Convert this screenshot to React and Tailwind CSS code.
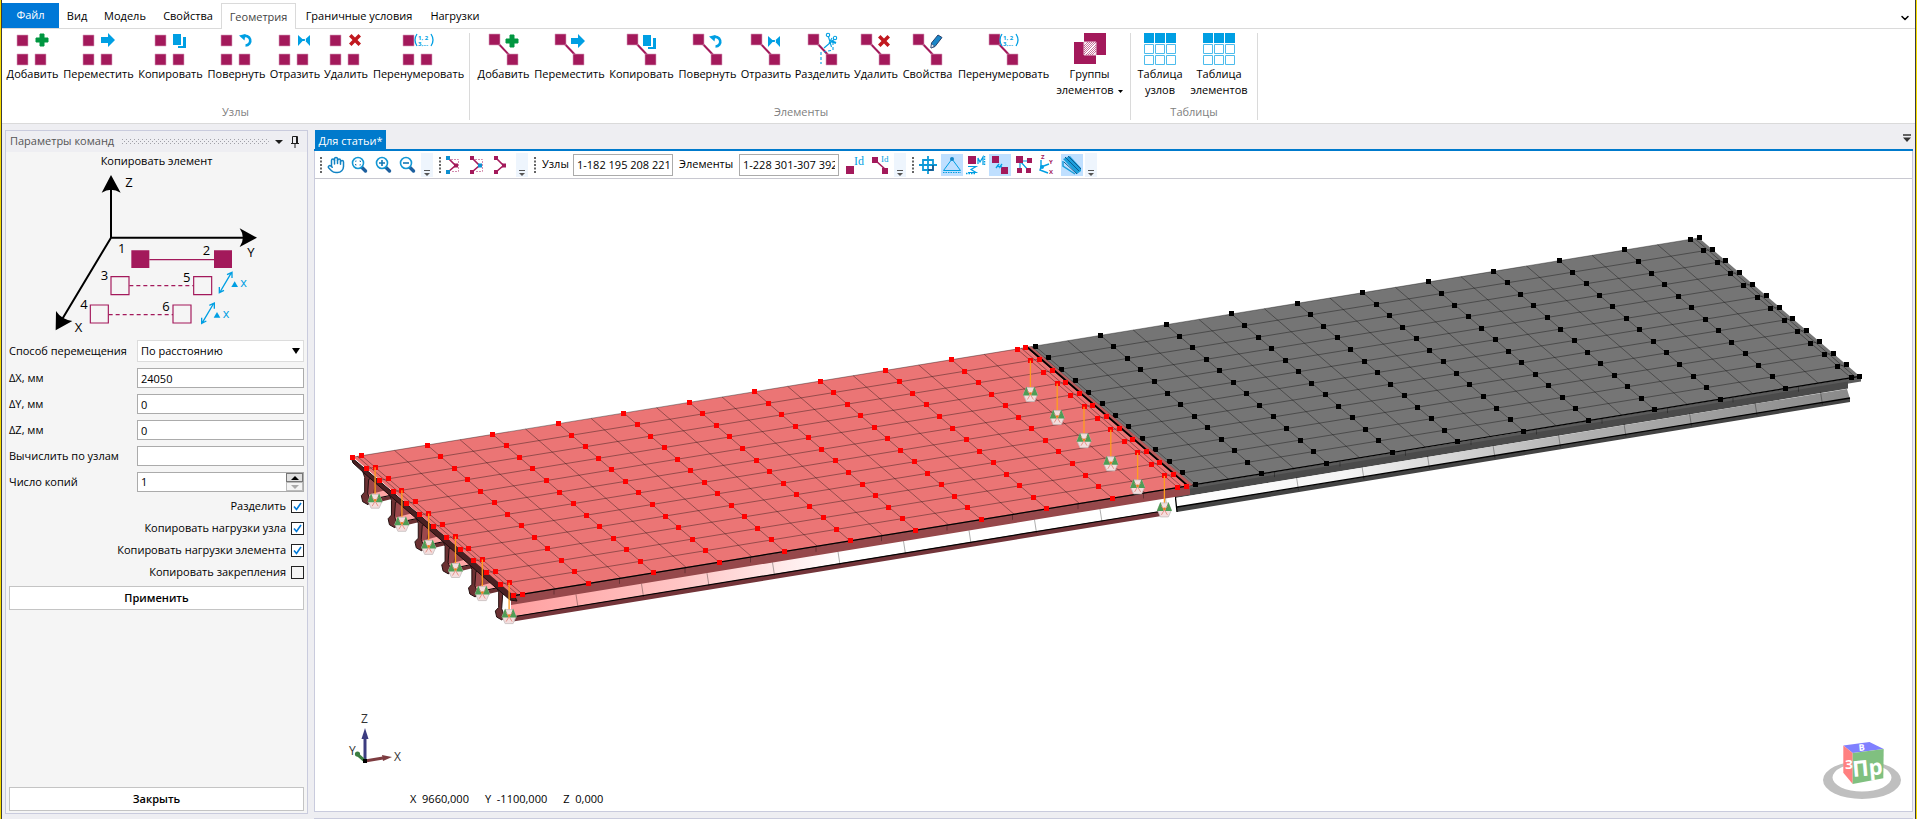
import React from "react";
import { Hand, ChevronDown } from "lucide-react";

const PLUM = "#a3195b";
const BLUE = "#009fe3";

/* ---------- ribbon icons ---------- */

function Badge({ kind }) {
  switch (kind) {
    case "add":
      return <path d="M5 1h4v4h4v4H9v4H5V9H1V5h4z" fill="#009640" stroke="#009640" />;
    case "move":
      return <path d="M0 4h7V0l7 7-7 7v-4H0z" fill={BLUE} />;
    case "copy":
      return (
        <g fill={BLUE}>
          <path d="M0 1h8v11H0z" />
          <path d="M10 4h3v11H5v-2h5z" />
        </g>
      );
    case "rotate":
      return (
        <g>
          <path d="M4 3.6A4.8 4.8 0 1 1 6.5 12.5" fill="none" stroke={BLUE} strokeWidth="2.6" />
          <path d="M0 2.5l6.5-1.5-1 6.5z" fill={BLUE} />
        </g>
      );
    case "mirror":
      return <path d="M1 2l5.5 5L1 13zM13 2L7.500 7 13 13zM5 6h4v2H5z" fill={BLUE} />;
    case "delete":
      return <path d="M3.500 1L7 4.500 10.500 1 13 3.500 9.500 7l3.500 3.500-2.500 2.500L7 9.500 3.500 13 1 10.500 4.500 7 1 3.500z" fill="#c1181f" />;
    case "cut":
      return (
        <g fill="none" stroke={BLUE} strokeWidth="1.1">
          <circle cx="4" cy="1" r="1.700" />
          <circle cx="11" cy="4" r="1.700" />
          <path d="M4.500 3l3 10M10 5.500L0 14M5 9l3-5" />
          <path d="M7 7l5 2" strokeWidth="2" />
          <path d="M-3 18v12M9 8v8l-9 2" strokeDasharray="3 2" />
        </g>
      );
    case "edit":
      return (
        <g>
          <path d="M9 1l4 2.500-7 9L2 14l.5-5z" fill="#1a86c8" stroke="#27406b" strokeWidth="1" />
          <path d="M2 14l.5-4 3 2z" fill="#fff" stroke="#27406b" strokeWidth=".6" />
        </g>
      );
    default:
      return null;
  }
}

function Numbers({ x }) {
  return (
    <g fill={BLUE} fontFamily="Open Sans, sans-serif" fontWeight="700">
      <text x={x + 4} y="7" fontSize="6">1, 2</text>
      <text x={x + 4} y="13" fontSize="6">3,...</text>
      <path
        d={`M${x + 3} 1q-4 6 0 12M${x + 17} 1q4 6 0 12`}
        fill="none"
        stroke={BLUE}
        strokeWidth="1.300"
      />
    </g>
  );
}

function NodeIcon({ kind }) {
  return (
    <svg viewBox="1 0 32 32" className="h-8 w-8 overflow-visible" aria-hidden="true">
      <g fill={PLUM} stroke="#d9a3bf" strokeWidth=".6">
        <path d="M1 2h11v11H1zM1 21h11v11H1zM19 21h11v11H19z" />
      </g>
      {kind === "renumber" ? (
        <Numbers x={12} />
      ) : (
        <g transform="translate(19 0)">
          <Badge kind={kind} />
        </g>
      )}
    </svg>
  );
}

function ElementIcon({ kind }) {
  return (
    <svg viewBox="0 0 32 32" className="h-8 w-8 overflow-visible" aria-hidden="true">
      <path d="M7 7l18 19" stroke={PLUM} strokeWidth="2" />
      <g fill={PLUM} stroke="#d9a3bf" strokeWidth=".6">
        <path d="M1 1h11v11H1zM19 21h11v11H19z" />
      </g>
      {kind === "renumber" ? (
        <Numbers x={11} />
      ) : (
        <g transform="translate(17 1)">
          <Badge kind={kind} />
        </g>
      )}
    </svg>
  );
}

function GroupsIcon() {
  return (
    <svg viewBox="0 0 32 32" className="h-8 w-8" aria-hidden="true">
      <path d="M10 0h22v22H22v9H0V9h10z" fill={PLUM} />
      <path d="M10 9h12v13H10z" fill="#fff" stroke="#e6c2d3" />
      <path
        d="M10 13l4-4M10 17l8-8M10 21l12-12M14 22l8-8M18 22l4-4M12 22l10-10M10 19l10-10M10 15l6-6M16 22l6-6"
        stroke={PLUM}
        strokeWidth=".6"
      />
    </svg>
  );
}

function TableIcon() {
  return (
    <svg viewBox="0 0 32 32" className="h-8 w-8" aria-hidden="true">
      <path d="M0 0h10v10H0zM11 0h10v10H11zM22 0h10v10H22z" fill={BLUE} />
      <path
        d="M.5 11.500h9v9h-9zM11.500 11.500h9v9h-9zM22.500 11.500h9v9h-9zM.5 22.500h9v9h-9zM11.500 22.500h9v9h-9zM22.500 22.500h9v9h-9z"
        fill="none"
        stroke="#4dbcec"
      />
    </svg>
  );
}

function RibbonButton({ icon, width, children }) {
  return (
    <button type="button" className={`flex shrink-0 flex-col items-center ${width}`}>
      {icon}
      <span className="mt-px whitespace-nowrap text-center leading-4">{children}</span>
    </button>
  );
}

function RibbonGroup({ title, pad, children }) {
  return (
    <section className={`flex shrink-0 flex-col border-r border-[#dadada] ${pad}`}>
      <div className="flex flex-1 items-start">{children}</div>
      <h2 className="text-center leading-4 text-[#808080]">{title}</h2>
    </section>
  );
}

const nodeTools = [
  ["add", "Добавить", "w-[57px]"],
  ["move", "Переместить", "w-[75px]"],
  ["copy", "Копировать", "w-[69px]"],
  ["rotate", "Повернуть", "w-[63px]"],
  ["mirror", "Отразить", "w-[54px]"],
  ["delete", "Удалить", "w-[48px]"],
  ["renumber", "Перенумеровать", "w-[97px]"],
];

const elementTools = [
  ["add", "Добавить", "w-[57px]"],
  ["move", "Переместить", "w-[75px]"],
  ["copy", "Копировать", "w-[69px]"],
  ["rotate", "Повернуть", "w-[63px]"],
  ["mirror", "Отразить", "w-[54px]"],
  ["cut", "Разделить", "w-[59px]"],
  ["delete", "Удалить", "w-[48px]"],
  ["edit", "Свойства", "w-[55px]"],
  ["renumber", "Перенумеровать", "w-[97px]"],
];

const tabs = [
  ["Вид", "w-9"],
  ["Модель", "w-[60px]"],
  ["Свойства", "w-[66px]"],
  ["Геометрия", "w-[75px]"],
  ["Граничные условия", "w-[126px]"],
  ["Нагрузки", "w-[66px]"],
];

function Ribbon() {
  return (
    <header className="bg-white">
      <nav className="flex h-[29px] items-end border-b border-[#dadada] pt-[3px]">
        <button type="button" className="h-full w-[57px] bg-[#0078d7] text-white">
          Файл
        </button>
        {tabs.map(([name, width]) => (
          <button
            key={name}
            type="button"
            className={
              name === "Геометрия"
                ? `-mb-px h-[26px] shrink-0 whitespace-nowrap border border-b-0 border-[#dadada] bg-white pt-0.5 text-[#444] ${width}`
                : `h-[25px] shrink-0 whitespace-nowrap pt-0.5 ${width}`
            }
          >
            {name}
          </button>
        ))}
        <button type="button" aria-label="Свернуть ленту" className="mb-1 ml-auto mr-1">
          <ChevronDown size={12} strokeWidth={3} />
        </button>
      </nav>
      <div className="flex h-[95px] overflow-hidden border-b border-[#dadada] pb-[3px] pt-1">
        <RibbonGroup title="Узлы" pad="pl-0.5 pr-0.5">
          {nodeTools.map(([kind, name, width]) => (
            <RibbonButton key={kind} width={width} icon={<NodeIcon kind={kind} />}>
              {name}
            </RibbonButton>
          ))}
        </RibbonGroup>
        <RibbonGroup title="Элементы" pad="pl-[5px] pr-[3px]">
          {elementTools.map(([kind, name, width]) => (
            <RibbonButton key={kind} width={width} icon={<ElementIcon kind={kind} />}>
              {name}
            </RibbonButton>
          ))}
          <RibbonButton width="w-[75px]" icon={<GroupsIcon />}>
            Группы
            <br />
            элементов
            <svg viewBox="0 0 5 3" className="ml-1 inline h-[3px] w-[5px] align-middle" aria-hidden="true">
              <path d="M0 0h5L2.500 3z" />
            </svg>
          </RibbonButton>
        </RibbonGroup>
        <RibbonGroup title="Таблицы" pad="pl-1 pr-1">
          <RibbonButton width="w-[50px]" icon={<TableIcon />}>
            Таблица
            <br />
            узлов
          </RibbonButton>
          <RibbonButton width="w-[68px]" icon={<TableIcon />}>
            Таблица
            <br />
            элементов
          </RibbonButton>
        </RibbonGroup>
      </div>
    </header>
  );
}

/* ---------- command panel ---------- */

function CopyDiagram() {
  return (
    <svg viewBox="18 135 900 489" className="h-[163px] w-[300px]" role="img" aria-label="Схема копирования">
      <g stroke="#000" strokeWidth="6" fill="none">
        <path d="M333 190V338H730M333 338L185 585" />
      </g>
      <path d="M333 150L362 203Q333 186 305 203zM771 338L719 310Q738 338 719 366zM167 616L168 558Q184 583 217 588z" />
      <path d="M448 404H643" stroke={PLUM} strokeWidth="4" />
      <path d="M394 376h54v53h-54zM642 376h54v53h-54z" fill={PLUM} />
      <g fill="none" stroke={PLUM} strokeWidth="3.500">
        <path d="M333 455h54v54h-54zM581 455h54v54h-54zM271 540h54v54h-54zM519 540h54v54h-54z" />
        <path d="M388 482H581M326 569H519" strokeDasharray="12 9" />
      </g>
      <g fontFamily="Open Sans, sans-serif" fontSize="39">
        <text x="376" y="186">Z</text>
        <text x="742" y="396">Y</text>
        <text x="224" y="622">X</text>
        <text x="354" y="384">1</text>
        <text x="608" y="391">2</text>
        <text x="302" y="466">3</text>
        <text x="241" y="551">4</text>
        <text x="549" y="471">5</text>
        <text x="487" y="557">6</text>
      </g>
      {[[0, 0], [-53, 92]].map(([x, y]) => (
        <g key={x} transform={`translate(${x} ${y})`}>
          <path d="M660 501L693 445M658 486v17l14-7M681 449l15-7v17" fill="none" stroke={BLUE} strokeWidth="4" />
          <path d="M694 486h20l-10-17z" fill={BLUE} />
          <text x="721" y="487" fontFamily="Open Sans, sans-serif" fontSize="38" fill={BLUE}>x</text>
        </g>
      ))}
    </svg>
  );
}

const fieldClass = "h-5 w-full min-w-0 border border-[#ababab] bg-white px-[3px] text-[11px] outline-none";

function Field({ id, label, value }) {
  return (
    <>
      <label htmlFor={id} className="whitespace-nowrap">{label}</label>
      <input id={id} type="text" defaultValue={value} className={fieldClass} />
    </>
  );
}

function CheckRow({ label, checked }) {
  return (
    <label className="flex h-[22px] items-center justify-end gap-[5px]">
      {label}
      <span className="relative flex h-[13px] w-[13px]">
        <input
          type="checkbox"
          defaultChecked={checked}
          className="peer h-[13px] w-[13px] appearance-none border border-[#222] bg-[#f5f5f5] checked:bg-white"
        />
        <svg
          viewBox="0 0 13 13"
          className="pointer-events-none absolute inset-0 hidden h-[13px] w-[13px] peer-checked:block"
          aria-hidden="true"
        >
          <path d="M3 6.500l2.500 3L10 3" fill="none" stroke="#0078d7" strokeWidth="1.600" />
        </svg>
      </span>
    </label>
  );
}

function CommandPanel() {
  return (
    <aside className="mb-[5px] ml-[3px] mt-1.5 flex w-[303px] shrink-0 flex-col border border-[#c9cbdd] bg-[#f5f5f5]">
      <div className="flex h-[21px] shrink-0 items-center bg-[#eeeef2] pl-1 pr-2 text-[#555]">
        <h2 className="whitespace-nowrap">Параметры команд</h2>
        <svg className="ml-2 mr-1.5 h-[5px] min-w-0 flex-1" aria-hidden="true">
          <defs>
            <pattern id="grip" width="4" height="4" patternUnits="userSpaceOnUse">
              <path d="M0 0h1v1H0zM2 2h1v1H2z" fill="#a0a0a8" />
            </pattern>
          </defs>
          <rect width="100%" height="5" fill="url(#grip)" />
        </svg>
        <button type="button" aria-label="Меню панели" className="flex w-4 justify-start">
          <svg viewBox="0 0 8 4" className="h-1 w-2" aria-hidden="true">
            <path d="M0 0h8L4 4z" fill="#1e1e1e" />
          </svg>
        </button>
        <button type="button" aria-label="Закрепить">
          <svg viewBox="0 0 8 12" className="h-3 w-2" aria-hidden="true">
            <path d="M1.500 7V.5h5V7M5.500 1v6M0 7.500h8M4 8v4" fill="none" stroke="#1e1e1e" />
          </svg>
        </button>
      </div>
      <div className="flex min-h-0 flex-1 flex-col px-[3px] pb-0.5">
        <h3 className="h-[18px] text-center leading-[18px]">Копировать элемент</h3>
        <div className="-mx-[3px] flex justify-start">
          <CopyDiagram />
        </div>
        <div className="mt-[7px] grid grid-cols-[128px_1fr] items-center gap-y-1.5">
          <label htmlFor="method" className="whitespace-nowrap">Способ перемещения</label>
          <div className="relative">
            <select
              id="method"
              className="h-[22px] w-full appearance-none border border-[#dcdcdc] bg-white px-[3px] text-[11px] outline-none"
            >
              <option>По расстоянию</option>
            </select>
            <svg viewBox="0 0 8 6" className="pointer-events-none absolute right-1 top-2 h-1.5 w-2" aria-hidden="true">
              <path d="M0 0h8L4 6z" />
            </svg>
          </div>
          <Field id="dx" label="ΔX, мм" value="24050" />
          <Field id="dy" label="ΔY, мм" value="0" />
          <Field id="dz" label="ΔZ, мм" value="0" />
          <Field id="by-nodes" label="Вычислить по узлам" value="" />
          <label htmlFor="copies">Число копий</label>
          <div className="flex h-5 border border-[#ababab] bg-white">
            <input id="copies" type="text" defaultValue="1" className="w-full min-w-0 px-[3px] text-[11px] outline-none" />
            <div className="flex w-[17px] shrink-0 flex-col">
              <button type="button" aria-label="Больше" className="flex flex-1 items-center justify-center border border-[#777] bg-[#e0e0e0]">
                <svg viewBox="0 0 8 4" className="h-1 w-2" aria-hidden="true"><path d="M0 4h8L4 0z" /></svg>
              </button>
              <button type="button" aria-label="Меньше" className="flex flex-1 items-center justify-center border border-[#bbb] bg-[#f4f4f4]">
                <svg viewBox="0 0 8 4" className="h-1 w-2" aria-hidden="true"><path d="M0 0h8L4 4z" fill="#aaa" /></svg>
              </button>
            </div>
          </div>
        </div>
        <div className="mt-[3px]">
          <CheckRow label="Разделить" checked />
          <CheckRow label="Копировать нагрузки узла" checked />
          <CheckRow label="Копировать нагрузки элемента" checked />
          <CheckRow label="Копировать закрепления" />
        </div>
        <button type="button" className="mt-[3px] h-6 shrink-0 border border-[#c4c4c4] bg-white font-semibold">
          Применить
        </button>
        <button type="button" className="mt-auto h-6 shrink-0 border border-[#c4c4c4] bg-white font-semibold">
          Закрыть
        </button>
      </div>
    </aside>
  );
}

/* ---------- view toolbar ---------- */

function Grip() {
  return (
    <svg viewBox="0 0 6 24" className="h-6 w-1.5 shrink-0" aria-hidden="true">
      <path d="M3 4v16" stroke="#666" strokeWidth="2" strokeDasharray="2 1.500" />
    </svg>
  );
}

function Overflow() {
  return (
    <button type="button" aria-label="Ещё" className="ml-px mr-1 h-6 w-3 shrink-0 bg-[#eef5fd]">
      <svg viewBox="0 0 12 24" className="h-6 w-3" aria-hidden="true">
        <path d="M3 17.500h6" stroke="#555" />
        <path d="M3 20h6l-3 3z" fill="#555" />
      </svg>
    </button>
  );
}

function ToolIcon({ label, active, children }) {
  return (
    <button
      type="button"
      aria-label={label}
      className={
        active
          ? "mx-px flex h-[22px] w-[22px] shrink-0 items-center justify-center bg-[#bfdfff]"
          : "flex h-6 w-6 shrink-0 items-center justify-center"
      }
    >
      {children}
    </button>
  );
}

function Glyph({ children }) {
  return (
    <svg viewBox="0 0 24 24" className="h-6 w-6 shrink-0" fill="none" aria-hidden="true">
      {children}
    </svg>
  );
}

function Lens({ children }) {
  return (
    <Glyph>
      <path d="M13.500 14l4 4" stroke="#1c5f9e" strokeWidth="3.400" strokeLinecap="round" />
      <circle cx="10" cy="10" r="5.500" fill="#fff" stroke="#1397d4" strokeWidth="1.600" />
      <g stroke="#1377b4" strokeWidth="1.600">{children}</g>
    </Glyph>
  );
}

function Selection({ a, b }) {
  return (
    <Glyph>
      {(a || b) && <path d="M8 6.500h7.500v12H8" stroke="#d28bad" strokeDasharray="2 1" />}
      <path d="M5 5l7.500 7.500L5 19" stroke={PLUM} strokeWidth="1.600" />
      <path d="M3 3h4v4H3zM3 17h4v4H3z" fill={a ? "#0d8fd0" : PLUM} />
      <path d="M11 10.500h4v4h-4z" fill={b ? "#0d8fd0" : PLUM} />
    </Glyph>
  );
}

const entryClass = "h-[22px] w-[100px] shrink-0 border border-[#ababab] bg-white px-[3px] text-[11px] outline-none";

function ViewToolbar() {
  return (
    <div className="flex h-[28px] shrink-0 items-center overflow-hidden border-b border-[#c8c8d0] bg-white pl-[3px]">
      <Grip />
      <ToolIcon label="Панорама"><Hand size={18} color="#1183c4" strokeWidth={2} /></ToolIcon>
      <ToolIcon label="Показать всё">
        <Lens><path d="M7.500 8.500V8h1M11.500 8h1v1M12.500 11.500v.5h-1M8.500 12h-1v-1" strokeWidth="1" /></Lens>
      </ToolIcon>
      <ToolIcon label="Приблизить"><Lens><path d="M7 10h6M10 7v6" /></Lens></ToolIcon>
      <ToolIcon label="Отдалить"><Lens><path d="M7 10h6" /></Lens></ToolIcon>
      <Overflow />
      <Grip />
      <ToolIcon label="Выбор узлов"><Selection a /></ToolIcon>
      <ToolIcon label="Выбор элементов"><Selection b /></ToolIcon>
      <ToolIcon label="Снять выбор"><Selection /></ToolIcon>
      <Overflow />
      <Grip />
      <label htmlFor="nodes" className="w-[35px] shrink-0 pl-1">Узлы</label>
      <input id="nodes" type="text" defaultValue="1-182 195 208 221" className={entryClass} />
      <label htmlFor="elements" className="w-[66px] shrink-0 pl-1.5">Элементы</label>
      <input id="elements" type="text" defaultValue="1-228 301-307 392" className={`mr-1.5 ${entryClass}`} />
      <ToolIcon label="Номера узлов">
        <Glyph>
          <path d="M1 13h8v8H1z" fill={PLUM} />
          <text x="9" y="12" fontFamily="Liberation Serif, serif" fontSize="12" fill={BLUE}>Id</text>
        </Glyph>
      </ToolIcon>
      <ToolIcon label="Номера элементов">
        <Glyph>
          <path d="M6 7l11 10" stroke={PLUM} strokeWidth="1.600" />
          <path d="M3 4h6v6H3zM13 15h6v6h-6z" fill={PLUM} />
          <text x="12" y="9" fontFamily="Liberation Serif, serif" fontSize="9" fill={BLUE}>Id</text>
        </Glyph>
      </ToolIcon>
      <Overflow />
      <Grip />
      <ToolIcon label="Сетка">
        <Glyph>
          <path d="M7 7h10v10H7zM12 3v18M3 12h18" stroke="#0d9ad8" strokeWidth="1.800" />
          <path d="M12 17h5v-5" stroke="#1c4f80" strokeWidth="1.400" />
        </Glyph>
      </ToolIcon>
      <ToolIcon label="Закрепления" active>
        <Glyph>
          <path d="M12 6L3.500 17.500h17z" stroke={BLUE} />
          <path d="M3 19.500h18" stroke={BLUE} strokeDasharray="1.500 1" />
          <circle cx="12" cy="6" r="2" fill="#1183c4" />
        </Glyph>
      </ToolIcon>
      <ToolIcon label="Нагрузки">
        <Glyph>
          <path d="M4 3h8v8H4z" fill={PLUM} />
          <path d="M4 13.500h8l-5 3 5 3H4M14 11V5l2 4 3-5v8" stroke={BLUE} strokeWidth="1.200" />
          <path d="M2 20.500h10M20.500 3v10" stroke={BLUE} strokeWidth="1.500" strokeDasharray="1.500 1" />
        </Glyph>
      </ToolIcon>
      <ToolIcon label="Узлы" active>
        <Glyph>
          <path d="M4 3h7v7H4zM13 14h7v7h-7z" fill={PLUM} />
          <path d="M8 15l3-4M11 15l3-4M9 13l5 1" stroke={BLUE} strokeWidth="1.300" />
        </Glyph>
      </ToolIcon>
      <ToolIcon label="Элементы">
        <Glyph>
          <path d="M8 8l9 10M8 8h10M8 8v10" stroke={BLUE} strokeWidth="1.200" />
          <path d="M4 3h7v7H4zM15 5h5v5h-5zM5 15h5v5H5zM14 15h5v5h-5z" fill={PLUM} />
        </Glyph>
      </ToolIcon>
      <ToolIcon label="Оси">
        <Glyph>
          <path d="M5 7v7l-1 3 8 3M5 14l8-3" stroke={BLUE} strokeWidth="1.400" />
          <circle cx="6" cy="14" r="2" fill={BLUE} />
          <g fontFamily="Open Sans, sans-serif" fontSize="6" fontWeight="700" fill={PLUM}>
            <text x="5" y="6">Z</text>
            <text x="13" y="11">Y</text>
            <text x="13" y="21">X</text>
          </g>
        </Glyph>
      </ToolIcon>
      <ToolIcon label="Сечения" active>
        <Glyph>
          <path d="M3 6l7-3 11 12v3l-4 3z" fill="#1b9edb" />
          <path d="M4 9l13 12M5 4l14 14M8 3l13 13" stroke="#0b5b91" />
          <path d="M3 8v5l12 8" stroke="#1b9edb" strokeWidth="1.500" />
        </Glyph>
      </ToolIcon>
      <Overflow />
    </div>
  );
}

/* ---------- 3D model ---------- */

const ROW = [13.4, 11.54];
const BAY = [65.53, -10.67];
const range = (n) => Array.from({ length: n }, (_, i) => i);

function pointAt(origin, bays, rows) {
  return [origin[0] + BAY[0] * bays + ROW[0] * rows, origin[1] + BAY[1] * bays + ROW[1] * rows];
}

function line(a, b) {
  return `M${a[0].toFixed(1)} ${a[1].toFixed(1)}L${b[0].toFixed(1)} ${b[1].toFixed(1)}`;
}

function Span({ origin, start, end, columns, fill, nodeFill }) {
  const corners = [
    pointAt(origin, start, 0),
    pointAt(origin, end, 0),
    pointAt(origin, end, 12),
    pointAt(origin, start, 12),
  ];
  const mesh = [
    ...range(13).map((r) => line(pointAt(origin, start, r), pointAt(origin, end, r))),
    ...range(21).map((c) => line(pointAt(origin, c / 2, 0), pointAt(origin, c / 2, 12))),
    line(pointAt(origin, start / 2, 0), pointAt(origin, start / 2, 12)),
    line(pointAt(origin, 10 + (end - 10) / 2, 0), pointAt(origin, 10 + (end - 10) / 2, 12)),
  ].join("");
  return (
    <g>
      <polygon points={corners.map((p) => p.join(",")).join(" ")} fill={fill} />
      <path d={mesh} stroke="#000" strokeOpacity=".45" strokeWidth=".8" fill="none" />
      <path d={line(corners[3], corners[2])} stroke="#000" strokeWidth="1.200" />
      {columns.map((c) =>
        range(13).map((r) => {
          const [x, y] = pointAt(origin, c, r);
          return <rect key={`${c}-${r}`} x={Math.round(x - 2.5)} y={Math.round(y - 2.5)} width="5" height="5" fill={nodeFill} />;
        })
      )}
    </g>
  );
}

function SideBand({ x1, y1, x2, from, to, fill }) {
  const y2 = y1 - 0.1628 * (x2 - x1);
  return <path d={`M${x1} ${y1 + from}L${x2} ${y2 + from}V${y2 + to}L${x1} ${y1 + to}z`} fill={fill} />;
}

function Support({ x, y }) {
  return (
    <g transform={`translate(${x.toFixed(1)} ${y.toFixed(1)})`}>
      <path d="M-4 -6h8l3 7-3 7h-8L-7 1z" fill="#f3dede" stroke="#c4bcbc" strokeWidth=".8" />
      <path d="M-4 -7l3.500 9h-7zM4 -7l-3.500 9h7z" fill="#4f9d56" />
      <path d="M-3 6L0 1l3 5M-3 -3l3 4 3-4" stroke="#e58a80" fill="none" strokeWidth=".9" />
      <circle r="1.300" fill="#e8821e" />
    </g>
  );
}

function Bearings({ origin }) {
  return range(6).map((i) => {
    const [x, y] = pointAt(origin, 0, i * 2 + 1);
    return (
      <g key={i}>
        <path d={`M${x} ${y}v33`} stroke="#ff9d1e" strokeWidth="1.300" />
        <Support x={x} y={y + 33} />
      </g>
    );
  });
}

function BeamEnd({ index }) {
  return (
    <g transform={`translate(${330 + index * 26.8} ${430 + index * 23.08}) scale(.3333)`}>
      {index < 5 && (
        <>
          <path d="M106 118L190 190V200L112 200z" fill="#9c484c" />
          <path d="M112 195L160 182L182 187V202L118 212z" fill="#ffa6a6" />
          <path d="M114 212L182 197V208L116 224z" fill="#6b3032" />
          <path d="M112 211L182 196" stroke="#000" strokeWidth="3" />
          <path d="M116 140L140 150L130 190" fill="none" stroke="#5a2427" strokeWidth="2" />
        </>
      )}
      <path
        d="M98 124L130 142L116 148L113 190L120 208L114 224L98 215L94 197L104 186V142z"
        fill="#6b3032"
        stroke="#241010"
        strokeWidth="3"
      />
    </g>
  );
}

function ModelView() {
  const red = [361.7, 455.7];
  const black = [1035, 346];
  return (
    <svg
      viewBox="315 179 1597 632"
      className="absolute inset-0 h-full w-full"
      role="img"
      aria-label="Расчётная модель пролётного строения"
    >
      <defs>
        <linearGradient id="webLeft">
          <stop offset="0" stopColor="#ffa0a0" />
          <stop offset=".25" stopColor="#ffc4c4" />
          <stop offset=".5" stopColor="#ffffff" />
          <stop offset="1" stopColor="#ffffff" />
        </linearGradient>
        <linearGradient id="webRight">
          <stop offset="0" stopColor="#ffffff" />
          <stop offset=".25" stopColor="#f4f4f4" />
          <stop offset=".6" stopColor="#b0b0b0" />
          <stop offset="1" stopColor="#8a8a8a" />
        </linearGradient>
      </defs>

      {/* right span, front side */}
      <SideBand x1={1186} y1={486.5} x2={1861} from={0} to={5} fill="#5a5a5a" />
      <SideBand x1={1176} y1={488} x2={1848} from={3} to={10} fill="#4a4a4a" />
      <path d="M1175 498L1847 389L1850 399L1178 508z" fill="url(#webRight)" />
      <path d="M1177 507L1850 398V402L1177 512z" fill="#444" />
      <path d="M1177 507L1850 398M1175 493l2 19" stroke="#000" strokeWidth="1.300" />

      {/* left span, front side */}
      <SideBand x1={511} y1={596} x2={1175} from={8} to={22} fill="url(#webLeft)" />
      <SideBand x1={511} y1={596} x2={1190} from={0} to={9} fill="#96484b" />
      <SideBand x1={510} y1={596} x2={1166} from={21} to={26} fill="#74353a" />
      <path d="M512 617L1166 510.500" stroke="#000" strokeWidth="1.200" />
      <path
        d={range(20)
          .filter((i) => i !== 10)
          .map((i) => {
            const x = 576 + i * 65.5;
            const y = 585.5 - i * 10.67;
            return `M${x} ${y + 9}l2 13M${x - 22} ${y + 4}v5`;
          })
          .join("")}
        stroke="#000"
        strokeOpacity=".4"
        strokeWidth=".8"
      />

      {range(6).map((i) => <BeamEnd key={i} index={i} />)}
      <path d="M351 457L353 463L364 473L510 600L517 601L514 595z" fill="#4a2022" stroke="#1c0c0c" />

      <Span origin={black} start={-0.11} end={10.133} columns={[...range(11), 10.133]} fill="#757575" nodeFill="#000" />
      <path d="M1025 347L1031 346.500L1193 485L1186 487z" fill="#b85c5c" />
      <path d="M1027 347L1188 486" stroke="#000" strokeWidth="2" />
      <Span origin={red} start={-0.133} end={10.133} columns={[-0.133, ...range(11), 10.133]} fill="#eb7575" nodeFill="#ff0000" />
      <Bearings origin={red} />
      <Bearings origin={[1017, 349]} />

      {/* coordinate axes */}
      <path d="M365 761V736" stroke="#3c3c80" strokeWidth="3" />
      <path d="M365 728l3.500 11h-7z" fill="#3c3c80" />
      <path d="M365 761l18-3" stroke="#7d3c40" strokeWidth="3" />
      <path d="M392 757l-9 4-1-6z" fill="#7d3c40" />
      <path d="M365 761l-7-6" stroke="#3a7d40" strokeWidth="3" />
      <circle cx="357.500" cy="754" r="2.600" fill="#3a7d40" />
      <path d="M363 759h4v4h-4z" />
      <g fontFamily="Open Sans, sans-serif" fontSize="12" fill="#333">
        <text x="361" y="723">Z</text>
        <text x="349" y="755">Y</text>
        <text x="394" y="761">X</text>
      </g>

      {/* orientation cube */}
      <path
        d="M1823 780a39 19 0 1 0 78 0a39 19 0 1 0 -78 0zM1832.500 777.500a29.500 14 0 1 1 59 0a29.500 14 0 1 1 -59 0z"
        fill="#bfbfbf"
        fillRule="evenodd"
      />
      <path d="M1843.300 745.500L1869.500 742L1883.700 749L1852.700 753z" fill="#8080ff" />
      <path d="M1843.300 745.500L1852.700 753V784L1843.300 772.700z" fill="#ff8080" />
      <path d="M1852.700 753L1883.700 749L1883.300 778.300L1852.700 784z" fill="#80c080" />
      <g fill="#fff" fontFamily="Open Sans, sans-serif" fontWeight="700">
        <text x="1853" y="777" fontSize="22" transform="rotate(-5 1853 777)">Пр</text>
        <text x="1859" y="751" fontSize="9" transform="rotate(-6 1859 751)">В</text>
        <text x="1845" y="769" fontSize="12">З</text>
      </g>
    </svg>
  );
}

function Document() {
  return (
    <main className="ml-1.5 mr-[2px] mt-1.5 flex min-w-0 flex-1 flex-col">
      <div className="flex h-[21px] shrink-0 items-start border-b-2 border-[#007acc]">
        <button type="button" className="ml-px h-5 w-[71px] whitespace-nowrap bg-[#007acc] pt-px leading-5 text-white">
          Для статьи*
        </button>
        <button type="button" aria-label="Список документов" className="ml-auto mr-0.5 mt-1">
          <svg viewBox="0 0 8 8" className="h-2 w-2" aria-hidden="true">
            <path d="M0 1h8" stroke="#333" strokeWidth="1.500" />
            <path d="M0 3.500h8L4 8z" fill="#333" />
          </svg>
        </button>
      </div>
      <div className="flex min-h-0 flex-1 flex-col border border-t-0 border-[#c9cbdd] bg-white">
        <ViewToolbar />
        <div className="relative min-h-0 flex-1 overflow-hidden">
          <ModelView />
          <p className="absolute bottom-1 left-[95px] flex gap-4 leading-4">
            <span>X&nbsp; 9660,000</span>
            <span>Y&nbsp; -1100,000</span>
            <span>Z&nbsp; 0,000</span>
          </p>
        </div>
      </div>
      <div className="mt-1.5 h-px shrink-0 bg-[#c9cbdd]" />
    </main>
  );
}

export default function App() {
  return (
    <div className="h-screen border-x border-[#f7dc00] font-['Open_Sans','Noto_Sans',sans-serif] text-[11px] text-black">
      <div className="flex h-full flex-col border-x border-[#3c3c3c] bg-[#eeeef2]">
        <Ribbon />
        <div className="flex min-h-0 flex-1">
          <CommandPanel />
          <Document />
        </div>
      </div>
    </div>
  );
}
